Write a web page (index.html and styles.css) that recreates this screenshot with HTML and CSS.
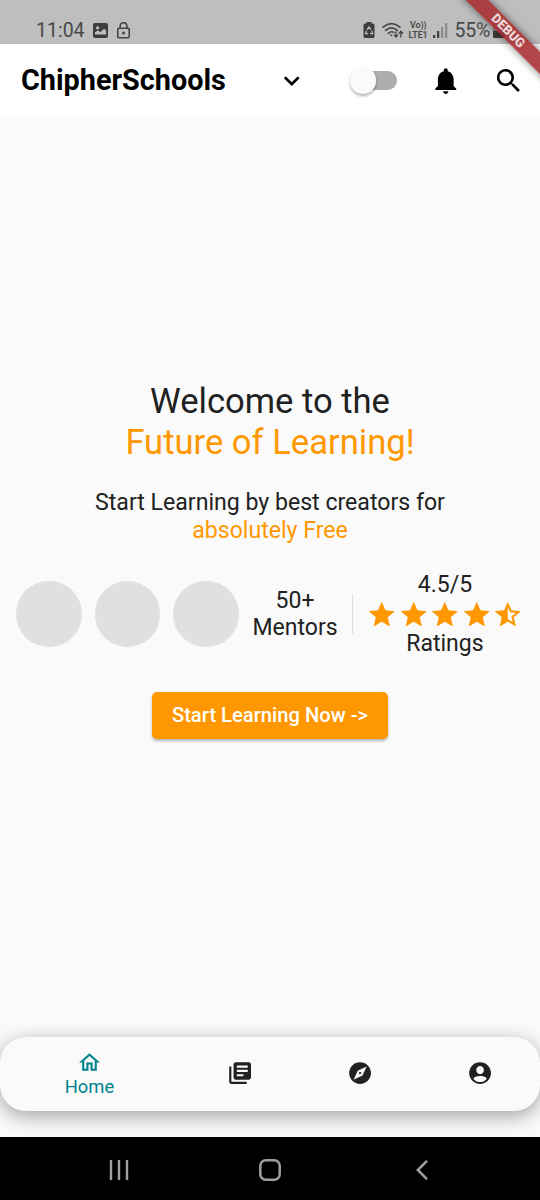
FILE: index.html
```html
<!DOCTYPE html>
<html lang="en">
<head>
<meta charset="utf-8">
<title>ChipherSchools</title>
<link rel="stylesheet" href="styles.css">
</head>
<body>
<header class="status">
  <span class="clock">11:04</span>
  <svg class="s-photo" width="15" height="15" viewBox="0 0 15 15"><rect width="15" height="15" rx="2" fill="#3d3d3d"/><circle cx="4.6" cy="4.8" r="1.6" fill="#bebebe"/><path d="M2 11.5V9.2l3-2 2.2 2 4-3.400 2 2v3.700z" fill="#bebebe"/></svg>
  <svg class="s-lock" width="13" height="17" viewBox="0 0 13 17" fill="none" stroke="#444" stroke-width="1.6"><rect x=".8" y="6.300" width="11.400" height="9.400" rx="1"/><path d="M3.200 6V4a3.300 3.300 0 0 1 6.600 0v2"/><circle cx="6.500" cy="11" r="1.500" fill="#444" stroke="none"/></svg>
  <svg class="s-saver" width="12" height="16" viewBox="0 0 12 16"><path d="M3.500 0h5v1.500h1.700Q11.500 1.500 11.500 3v11.500Q11.500 16 10 16H2Q.5 16 .5 14.500V3Q.5 1.500 2 1.500h1.500z" fill="#3d3d3d"/><path d="M4 8 6 5l2 3M8.800 9l.8 2.700H7M5 11.700H2.500L3.400 9" fill="none" stroke="#bebebe" stroke-width="1.300"/></svg>
  <svg class="s-wifi" width="22" height="17" viewBox="0 0 22 17" fill="none" stroke="#444" stroke-width="1.600" stroke-linecap="round"><path d="M1 5.200q8.500-7 17 0M3.600 8.300q5.900-4.800 11.800 0M6.300 11.300q3.200-2.700 5.500-.8"/><circle cx="9.300" cy="13.200" r="1" fill="#444" stroke="none"/><path d="M14 9.500v5.500m-1.800-1.900L14 15l1.800-1.900M18.900 15V9.300m-1.800 1.900 1.800-1.900 1.800 1.900" stroke-width="1.300"/></svg>
  <span class="volte"><span class="vo">Vo))</span><span>LTE1</span></span>
  <svg class="s-signal" width="15" height="16" viewBox="0 0 15 16"><path d="M0 13h2.300v3H0zM4 9h2.300v7H4z" fill="#444"/><path d="M8 5h2.300v11H8zM12 1h2.300v15H12z" fill="#8d8d8d"/></svg>
  <span class="percent">55%</span>
  <svg class="s-battery" width="13" height="17" viewBox="0 0 13 17"><path d="M3.500 0h5v2H12v7H0V2h3.500z" fill="#909090"/><path d="M0 9h12v6q0 1-1 1H1q-1 0-1-1z" fill="#3d3d3d"/></svg>
</header>
<div class="appbar">
  <h1 class="title">ChipherSchools</h1>
  <svg class="icon chevron" viewBox="0 0 24 24"><path d="M7.410 8.590 12 13.170l4.590-4.580L18 10l-6 6-6-6z"/></svg>
  <span class="switch"><span class="thumb"></span></span>
  <svg class="icon bell" viewBox="0 0 24 24"><path d="M12 22c1.100 0 2-.9 2-2h-4c0 1.100.89 2 2 2zm6-6v-5c0-3.070-1.640-5.640-4.500-6.320V4c0-.83-.67-1.500-1.500-1.500s-1.500.67-1.500 1.500v.68C7.630 5.360 6 7.920 6 11v5l-2 2v1h16v-1l-2-2z"/></svg>
  <svg class="icon search" viewBox="0 0 24 24"><path d="M15.500 14h-.79l-.28-.27C15.410 12.590 16 11.110 16 9.500 16 5.910 13.090 3 9.500 3S3 5.910 3 9.500 5.910 16 9.500 16c1.610 0 3.090-.59 4.230-1.570l.27.28v.79l5 4.990L20.490 19l-4.990-5zm-6 0C7.010 14 5 11.990 5 9.500S7.010 5 9.500 5 14 7.010 14 9.500 11.990 14 9.500 14z"/></svg>
</div>
<main class="hero">
  <h2 class="welcome">Welcome to the<br><span class="accent">Future of Learning!</span></h2>
  <p class="tagline">Start Learning by best creators for<br><span class="accent free">absolutely Free</span></p>
  <section class="stats">
    <span class="avatar"></span><span class="avatar"></span><span class="avatar"></span>
    <p class="mentors">50+<br>Mentors</p>
    <span class="divider"></span>
    <div class="ratings">
      <span class="score">4.5/5</span>
      <div class="stars">
        <svg class="icon" viewBox="0 0 24 24"><path id="star" d="M12 17.270 18.180 21l-1.640-7.030L22 9.240l-7.190-.61L12 2 9.190 8.630 2 9.240l5.460 4.730L5.820 21z"/></svg>
        <svg class="icon" viewBox="0 0 24 24"><use href="#star"/></svg>
        <svg class="icon" viewBox="0 0 24 24"><use href="#star"/></svg>
        <svg class="icon" viewBox="0 0 24 24"><use href="#star"/></svg>
        <svg class="icon" viewBox="0 0 24 24"><path d="m22 9.240-7.190-.62L12 2 9.190 8.630 2 9.240l5.460 4.730L5.820 21 12 17.270 18.180 21l-1.630-7.030L22 9.240zM12 15.400V6.100l1.710 4.040 4.380.38-3.320 2.880 1 4.280L12 15.400z"/></svg>
      </div>
      <span>Ratings</span>
    </div>
  </section>
  <button class="cta">Start Learning Now -&gt;</button>
</main>
<nav class="tabs">
  <a class="tab active"><svg class="tab-icon" viewBox="0 0 24 24"><path d="m12 5.690 5 4.500V18h-2v-6H9v6H7v-7.810l5-4.500M12 3 2 12h3v8h6v-6h2v6h6v-8h3L12 3z"/></svg><span>Home</span></a>
  <a class="tab"><svg class="tab-icon" viewBox="0 0 24 24"><path d="M4 6H2v14c0 1.100.9 2 2 2h14v-2H4V6zm16-4H8c-1.100 0-2 .9-2 2v12c0 1.100.9 2 2 2h12c1.100 0 2-.9 2-2V4c0-1.100-.9-2-2-2zm-1 9H9V9h10v2zm-4 4H9v-2h6v2zm4-8H9V5h10v2z"/></svg></a>
  <a class="tab"><svg class="tab-icon" viewBox="0 0 24 24"><path d="M12 10.900c-.61 0-1.100.49-1.100 1.100s.49 1.100 1.100 1.100c.61 0 1.100-.49 1.100-1.100s-.49-1.100-1.100-1.100zM12 2C6.480 2 2 6.480 2 12s4.480 10 10 10 10-4.480 10-10S17.520 2 12 2zm2.190 12.190L6 18l3.810-8.190L18 6l-3.810 8.190z"/></svg></a>
  <a class="tab"><svg class="tab-icon" viewBox="0 0 24 24"><path d="M12 2C6.480 2 2 6.480 2 12s4.480 10 10 10 10-4.480 10-10S17.520 2 12 2zm0 3.500c1.930 0 3.500 1.570 3.500 3.750S13.930 13 12 13s-3.500-1.570-3.500-3.750S10.070 5.500 12 5.500zm0 14.700c-2.500 0-4.710-1-6-2.900.03-1.990 4-2.700 6-2.700 1.990 0 5.970.71 6 2.700-1.290 1.900-3.500 2.900-6 2.900z"/></svg></a>
</nav>
<footer class="sysnav">
  <svg width="20" height="20" viewBox="0 0 20 20"><path d="M2 0v20M10 0v20M18 0v20" stroke="#a0a0a0" stroke-width="2.400"/></svg>
  <svg width="22" height="22" viewBox="0 0 22 22"><rect x="1.300" y="1.300" width="19.400" height="19.400" rx="5.500" fill="none" stroke="#a0a0a0" stroke-width="2.500"/></svg>
  <svg width="12" height="20" viewBox="0 0 12 20"><path d="M11 .8 1.800 10 11 19.200" fill="none" stroke="#a0a0a0" stroke-width="2.500"/></svg>
</footer>
<div class="debug-corner"><div class="debug">DEBUG</div></div>
</body>
</html>
```
FILE: styles.css
```css
* { box-sizing: border-box; }
body {
  margin: 0;
  position: relative;
  width: 540px;
  height: 1200px;
  overflow: hidden;
  display: flex;
  flex-direction: column;
  background: #fafafa;
  color: #212121;
  font-family: Roboto, sans-serif;
}
h1, h2, p { margin: 0; font-weight: 400; }
svg { display: block; flex: none; }
.icon { width: 31.5px; height: 31.5px; fill: currentColor; }
.accent { color: #ff9800; }

.status {
  height: 44px;
  flex: none;
  display: flex;
  align-items: center;
  padding: 16px 0 0 36px;
  background: #bebebe;
  color: #484848;
  font-size: 19.5px;
  line-height: 24px;
}
.clock { width: 56.5px; padding-top: 2px; }
.s-photo { margin-right: 9.500px; }
.s-lock { margin-right: 232.500px; }
.s-saver { margin-right: 7px; }
.s-wifi { margin-right: 5px; }
.volte {
  display: flex;
  flex-direction: column;
  width: 24px;
  font-size: 8.800px;
  line-height: 10.500px;
  font-weight: 600;
  white-space: nowrap;
}
.vo { padding-left: 1.500px; }
.s-signal { margin-right: 7px; }
.percent { width: 38px; padding-top: 2px; letter-spacing: -.2px; }

.appbar {
  height: 73px;
  flex: none;
  display: flex;
  align-items: center;
  padding-left: 21px;
  background: #fff;
  color: #000;
}
.title { width: 255px; font-size: 28.8px; font-weight: 700; line-height: 34px; margin-top: -1px; }
.switch {
  width: 43.3px;
  height: 18.4px;
  margin-left: 46.500px;
  border-radius: 10px;
  background: #adadad;
  display: flex;
  align-items: center;
}
.thumb {
  width: 26.2px;
  height: 26.2px;
  flex: none;
  margin-left: -4.500px;
  border-radius: 50%;
  background: #fafafa;
  box-shadow: 0 2px 3px rgba(0, 0, 0, .3);
}
.bell { margin-left: 32.500px; }
.search { margin-left: 31.500px; }

.hero {
  flex: 1;
  display: flex;
  flex-direction: column;
  align-items: center;
  padding-top: 264.400px;
  text-align: center;
}
.welcome { font-size: 34.6px; line-height: 41px; }
.tagline { margin-top: 26px; font-size: 23.1px; line-height: 27.7px; }
.stats {
  align-self: stretch;
  display: flex;
  align-items: center;
  margin-top: 26px;
  padding-left: 16px;
  font-size: 23px;
  line-height: 27.7px;
}
.avatar {
  width: 65.6px;
  height: 65.6px;
  margin-right: 13.1px;
  border-radius: 50%;
  background: #e0e0e0;
}
.mentors { width: 86px; }
.divider { width: 1px; height: 40px; margin: 0 13.300px 0 13.800px; background: #dedede; }
.ratings { display: flex; flex-direction: column; align-items: center; }
.stars { display: flex; color: #ff9800; }
.cta {
  width: 236.5px;
  height: 47.5px;
  margin-top: 33.800px;
  padding: 0;
  border: 0;
  border-radius: 5px;
  background: #ff9800;
  box-shadow: 0 2px 3px rgba(0, 0, 0, .28);
  color: #fff;
  font: 500 20.2px/24px Roboto, sans-serif;
}

.tabs {
  height: 73.5px;
  flex: none;
  display: flex;
  margin-bottom: 26.5px;
  border-radius: 26px;
  background: #fafafa;
  box-shadow: 0 5px 19px rgba(0, 0, 0, .36);
}
.tab {
  width: 120px;
  display: flex;
  flex-direction: column;
  align-items: center;
  justify-content: center;
}
.tab-icon { width: 26.2px; height: 26.2px; margin-top: -2px; fill: currentColor; }
.active { width: 179px; padding-top: 3px; color: #00838f; font-size: 18.400px; line-height: 23px; }
.tab:nth-child(2) { margin-left: 1px; }
.active .tab-icon { width: 25px; height: 25px; }

.sysnav {
  height: 63px;
  flex: none;
  display: flex;
  align-items: center;
  gap: 130px;
  padding: 3px 0 0 109px;
  background: #000;
}
.sysnav svg:last-child { margin-left: 4.500px; }

.debug-corner {
  position: absolute;
  top: 0;
  right: 0;
  width: 110px;
  height: 110px;
  overflow: hidden;
}
.debug {
  width: 160px;
  height: 16px;
  margin: 23px 0 0 -2px;
  transform: rotate(45deg);
  background: rgba(166, 45, 48, .88);
  box-shadow: 0 0 8px rgba(0, 0, 0, .5);
  color: #ecd9da;
  font-size: 13px;
  font-weight: 900;
  line-height: 16px;
  text-align: center;
}
```
